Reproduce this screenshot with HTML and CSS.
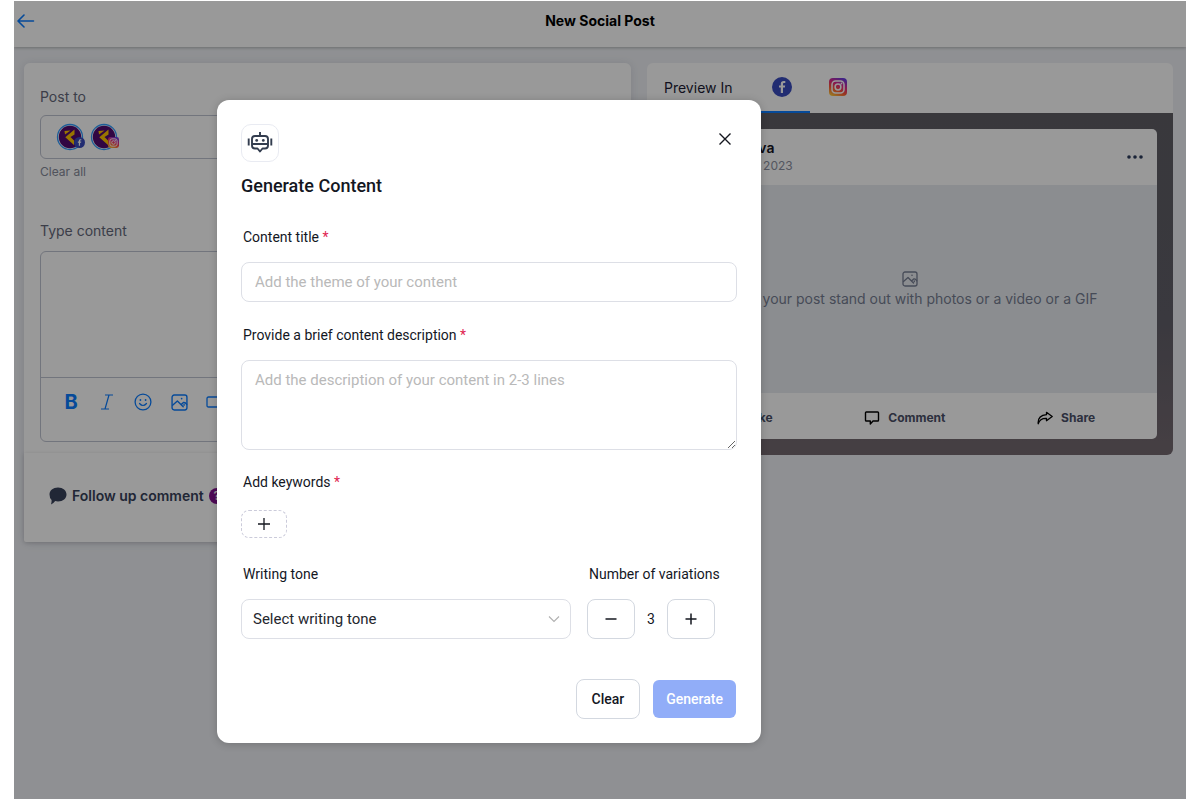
FILE: index.html
```
<!DOCTYPE html>
<html lang="en">
<head>
<meta charset="utf-8">
<title>New Social Post</title>
<link rel="stylesheet" href="styles.css">
</head>
<body>
<svg class="defs" aria-hidden="true">
  <defs>
    <linearGradient id="ig" x1="0.2" y1="1" x2="0.7" y2="0">
      <stop offset="0" stop-color="#ffc83d"/><stop offset="0.35" stop-color="#ff5a35"/><stop offset="0.65" stop-color="#e0268a"/><stop offset="1" stop-color="#6a3be0"/>
    </linearGradient>
    <symbol id="facebook" viewBox="0 0 20 20">
      <circle cx="10" cy="10" r="10" fill="#3a4bbe"/>
      <path d="M11 16v-5.400h1.900l.3-2.200H11V7.100c0-.7.300-1.100 1.200-1.100h1.100V4.100c-.4-.1-1-.1-1.600-.1-1.800 0-2.900 1-2.900 2.800v1.600H7v2.200h1.800V16z" fill="#fff"/>
    </symbol>
    <symbol id="instagram" viewBox="0 0 18 18">
      <rect width="18" height="18" rx="4" fill="url(#ig)"/>
      <rect x="3" y="3" width="12" height="12" rx="3.500" fill="none" stroke="#fff" stroke-width="1.500"/>
      <circle cx="9" cy="9" r="2.900" fill="none" stroke="#fff" stroke-width="1.500"/>
      <circle cx="12.500" cy="5.500" r="0.900" fill="#fff"/>
    </symbol>
    <symbol id="brand" viewBox="0 0 28 28">
      <circle cx="14" cy="14" r="12.500" fill="#fff" stroke="#2f9bff" stroke-width="1.300"/>
      <circle cx="14" cy="14" r="11.200" fill="#520b70"/>
      <path d="M18.500 6.500v5L14.500 14l3.500 3.500V22L9.300 14.300z" fill="#ffc400"/>
      <path d="M8.500 8l6-.5-5.500 4z" fill="#ffc400"/>
    </symbol>
    <symbol id="picture" viewBox="0 0 16 16">
      <g fill="none" stroke="currentColor" stroke-width="1.300" stroke-linejoin="round" stroke-linecap="round">
        <rect x="1" y="1" width="14" height="14" rx="2"/>
        <path d="M1.500 10.500 6 6.500l5.500 5.500M9.500 10l2.200-2q1.800-.4 3.100 1.800M12.300 9.800v.9"/>
      </g>
      <circle cx="10" cy="4.300" r="0.800" fill="currentColor"/>
    </symbol>
  </defs>
</svg>

<div class="app">
  <header class="topbar">
    <button class="back" aria-label="Back">
      <svg width="18" height="14" viewBox="0 0 18 14"><path d="M16.500 7H1.500M7 1 1 7l6 6" fill="none" stroke="currentColor" stroke-width="1.600" stroke-linecap="round" stroke-linejoin="round"/></svg>
    </button>
    <h1>New Social Post</h1>
  </header>

  <main class="columns">
    <section class="composer">
      <div class="composer-main">
        <h2 class="caption">Post to</h2>
        <div class="accounts">
          <span class="account"><svg width="28" height="28"><use href="#brand"/></svg><svg class="badge" width="11" height="11"><use href="#facebook"/></svg></span>
          <span class="account"><svg width="28" height="28"><use href="#brand"/></svg><svg class="badge" width="11" height="11"><use href="#instagram"/></svg></span>
        </div>
        <button class="clear-all">Clear all</button>
        <label class="caption" for="post">Type content</label>
        <div class="editor">
          <textarea id="post"></textarea>
          <div class="tools">
            <button class="bold" aria-label="Bold">B</button>
            <button aria-label="Italic"><svg width="18" height="18" viewBox="0 0 18 18"><path d="M7 2h8M3 16h8M11 2 7 16" fill="none" stroke="currentColor" stroke-width="1.200"/></svg></button>
            <button aria-label="Emoji"><svg width="18" height="18" viewBox="0 0 18 18"><circle cx="9" cy="9" r="7.900" fill="none" stroke="currentColor" stroke-width="1.300"/><path d="M5.500 10.500q3.500 4 7 0" fill="none" stroke="currentColor" stroke-width="1.200" stroke-linecap="round"/><circle cx="6.400" cy="7" r="0.900" fill="currentColor"/><circle cx="11.600" cy="7" r="0.900" fill="currentColor"/></svg></button>
            <button aria-label="Image"><svg width="17" height="17"><use href="#picture"/></svg></button>
            <button aria-label="Video"><svg width="18" height="18" viewBox="0 0 18 18"><path d="M2.500 4H11q1.500 0 1.500 1.500v7q0 1.500-1.500 1.500H2.500Q1 14 1 12.500v-7Q1 4 2.500 4zM12.500 8 17 5.500v7L12.500 10" fill="none" stroke="currentColor" stroke-width="1.300"/></svg></button>
          </div>
        </div>
      </div>
      <div class="followup">
        <svg width="18" height="18" viewBox="0 0 18 18"><path d="M9 .5c5 0 8.500 3 8.500 7s-3.500 7-8.500 7c-1 0-2-.1-2.800-.4Q4.500 16.500 2 17.500q.8-2 .6-4.500Q.5 11 .5 7.500c0-4 3.500-7 8.500-7z" fill="currentColor"/></svg>
        <span>Follow up comment</span>
        <span class="help">?</span>
      </div>
    </section>

    <section class="preview">
      <div class="tabs">
        <h2>Preview In</h2>
        <button class="tab active" aria-label="Facebook"><svg width="20" height="20"><use href="#facebook"/></svg></button>
        <button class="tab" aria-label="Instagram"><svg width="18" height="18"><use href="#instagram"/></svg></button>
      </div>
      <div class="stage">
        <article class="post">
          <div class="post-head">
            <svg width="36" height="36"><use href="#brand"/></svg>
            <div class="who"><strong>Geneva</strong><span>Nov 9, 2023</span></div>
            <button class="more" aria-label="More"><svg width="16" height="4" viewBox="0 0 16 4"><g fill="currentColor"><circle cx="2" cy="2" r="1.800"/><circle cx="8" cy="2" r="1.800"/><circle cx="14" cy="2" r="1.800"/></g></svg></button>
          </div>
          <div class="media">
            <svg width="16" height="16"><use href="#picture"/></svg>
            <span>Make your post stand out with photos or a video or a GIF</span>
          </div>
          <div class="actions">
            <button><svg width="16" height="16" viewBox="0 0 16 16"><path d="M1.500 7H5v7H1.500zM5 7l3-5.500q2 0 1.500 4.500H14l-1 8H5" fill="none" stroke="#000" stroke-width="1.300"/></svg>Like</button>
            <button><svg width="16" height="16" viewBox="0 0 16 16"><path d="M2.300 2h11.400q.8 0 .8.800v7.400q0 .8-.8.800H9l-2.700 3V11h-4q-.8 0-.8-.8V2.800q0-.8.800-.8z" fill="none" stroke="#000" stroke-width="1.400" stroke-linejoin="round"/></svg>Comment</button>
            <button><svg width="16" height="16" viewBox="0 0 16 16"><path d="M9.500 2.300 15.200 6.500 9.500 10.700V8.300Q3 8 1.200 13.800.5 5.500 9.500 4.700z" fill="none" stroke="#000" stroke-width="1.300" stroke-linejoin="round"/></svg>Share</button>
          </div>
        </article>
      </div>
    </section>
  </main>

  <div class="backdrop">
    <form class="modal" role="dialog" aria-labelledby="dialog-title">
      <div class="modal-top">
        <span class="bot">
          <svg width="26" height="24" viewBox="0 0 26 24"><g fill="none" stroke="currentColor" stroke-width="1.900" stroke-linejoin="round"><path d="M13 1v4M8 5h10q3 0 3 3v6.500q0 3-3 3h-2.500L13 20.500l-2.500-3H8q-3 0-3-3V8q0-3 3-3zM5 13h16M1.700 7.500v7M24.300 7.500v7"/></g><circle cx="9.700" cy="9.400" r="1.400" fill="currentColor"/><circle cx="16.300" cy="9.400" r="1.400" fill="currentColor"/></svg>
        </span>
        <button type="button" class="close" aria-label="Close"><svg width="12" height="12" viewBox="0 0 12 12"><path d="M.5.500l11 11M11.500.500l-11 11" stroke="currentColor" stroke-width="1.400"/></svg></button>
      </div>
      <h2 id="dialog-title">Generate Content</h2>

      <label for="title">Content title <em>*</em></label>
      <input id="title" class="field" type="text" placeholder="Add the theme of your content">

      <label for="description">Provide a brief content description <em>*</em></label>
      <textarea id="description" class="field area" placeholder="Add the description of your content in 2-3 lines"></textarea>

      <label for="add-keyword">Add keywords <em>*</em></label>
      <button type="button" id="add-keyword" class="chip" aria-label="Add keyword"><svg width="12" height="12" viewBox="0 0 12 12"><path d="M6 0v12M0 6h12" stroke="currentColor" stroke-width="1.300"/></svg></button>

      <div class="options">
        <div class="tone">
          <label for="tone">Writing tone</label>
          <div class="select">
            <select id="tone" class="field"><option>Select writing tone</option></select>
            <svg width="12" height="8" viewBox="0 0 12 8"><path d="M1 1.500l5 5 5-5" fill="none" stroke="currentColor" stroke-width="1.100"/></svg>
          </div>
        </div>
        <div class="count">
          <label for="variations">Number of variations</label>
          <div class="stepper">
            <button type="button" aria-label="Fewer"><svg width="12" height="12" viewBox="0 0 12 12"><path d="M.5 6h11" stroke="currentColor" stroke-width="1.500"/></svg></button>
            <output id="variations">3</output>
            <button type="button" aria-label="More variations"><svg width="12" height="12" viewBox="0 0 12 12"><path d="M6 .5v11M.5 6h11" stroke="currentColor" stroke-width="1.500"/></svg></button>
          </div>
        </div>
      </div>

      <div class="footer">
        <button type="reset" class="clear">Clear</button>
        <button type="button" class="generate">Generate</button>
      </div>
    </form>
  </div>
</div>
</body>
</html>
```
FILE: styles.css
```
* { box-sizing: border-box; }
body {
  margin: 0;
  padding: 1px 14px;
  background: #fff;
  font-family: Inter, sans-serif;
  font-size: 14px;
  line-height: 20px;
}
h1, h2 { margin: 0; }
button, input, textarea, select { font: inherit; color: inherit; }
button { padding: 0; border: 0; background: none; cursor: pointer; }
svg { display: block; flex: none; }
.defs { position: absolute; width: 0; height: 0; }

.app {
  position: relative;
  min-height: calc(100vh - 2px);
  background: #eff1f5;
}

.topbar {
  display: grid;
  grid-template-columns: 1fr auto 1fr;
  height: 46px;
  padding: 10px 3px 0;
  background: #fff;
  box-shadow: 0 1px 3px rgba(0, 0, 0, 0.25);
  clip-path: inset(0 0 -6px);
}
.topbar h1 { font-size: 14px; font-weight: 700; color: #000; }
.back { display: flex; align-items: center; height: 20px; color: #0a7cff; }

.columns {
  display: grid;
  grid-template-columns: 607fr 526fr;
  gap: 16px;
  align-items: start;
  padding: 16px 13px 16px 10px;
}

.composer {
  border-radius: 6px;
  box-shadow: 0 1px 10px rgba(60, 60, 100, 0.15);
}
.composer-main {
  padding: 24px 16px 11px;
  background: #fff;
  border-radius: 6px 6px 0 0;
}
.caption { display: block; font-size: 14px; font-weight: 400; color: #64687a; }
.accounts {
  display: flex;
  align-items: center;
  gap: 6px;
  height: 44px;
  margin-top: 8px;
  padding: 0 15px;
  border: 1px solid #bfc3d0;
  border-radius: 6px;
}
.account { position: relative; }
.badge { position: absolute; right: -1px; bottom: 3px; }
.clear-all {
  display: block;
  margin: 3px 0 39px;
  font-size: 12px;
  color: #858a99;
}
.editor {
  margin-top: 10px;
  border: 1px solid #bfc3d0;
  border-radius: 6px;
}
.editor textarea {
  display: block;
  width: 100%;
  height: 126px;
  border: 0;
  border-bottom: 1px solid #bfc3d0;
  background: none;
  resize: none;
}
.tools {
  display: flex;
  gap: 18px;
  height: 63px;
  padding: 14px 21px;
  color: #0a7cff;
}
.tools button { display: flex; justify-content: center; align-items: center; width: 18px; height: 20px; }
.tools .bold { font-size: 20px; font-weight: 700; }
.followup {
  display: flex;
  align-items: center;
  gap: 5px;
  height: 89px;
  padding: 0 25px 4px;
  background: #fff;
  border-radius: 0 0 2px 2px;
  box-shadow: 0 1px 4px rgba(0, 0, 0, 0.15);
  font-weight: 600;
  color: #38415a;
}
.help {
  width: 16px;
  height: 16px;
  border-radius: 50%;
  background: #83108f;
  color: #fff;
  font-size: 12px;
  line-height: 16px;
  text-align: center;
}

.preview { border-radius: 6px; overflow: hidden; }
.tabs { display: flex; height: 50px; padding-left: 17px; background: #fff; }
.tabs h2 { width: 90px; padding-top: 15px; font-size: 14px; font-weight: 400; color: #1c1c34; }
.tab { display: flex; justify-content: center; align-items: center; width: 56px; border-bottom: 2px solid transparent; }
.tab.active { border-color: #0a7cff; }
.stage {
  padding: 16px;
  background: linear-gradient(#5f5e65, #615f69 60%, #756a71);
}
.post { background: #fff; border-radius: 5px; overflow: hidden; }
.post-head { display: flex; align-items: center; gap: 8px; height: 56px; padding: 0 14px 0 16px; }
.who { display: flex; flex: 1; flex-direction: column; line-height: 18px; }
.who strong { font-weight: 600; color: #14141f; }
.who span { font-size: 12px; color: #8b90a0; }
.more { color: #2c3b5c; }
.media {
  display: flex;
  flex-direction: column;
  align-items: center;
  justify-content: center;
  gap: 2px;
  height: 208px;
  padding-top: 2px;
  background: #e8ecf0;
  color: #767d92;
}
.actions {
  display: flex;
  justify-content: space-around;
  height: 46px;
  padding: 4px 16px 0;
}
.actions button { display: flex; align-items: center; gap: 8px; font-size: 12px; font-weight: 700; color: #4a5068; }

.backdrop {
  position: absolute;
  inset: 0;
  padding: 99px 203px;
  background: rgba(0, 0, 0, 0.4);
}
.modal {
  max-width: 544px;
  padding: 24px;
  background: #fff;
  border-radius: 12px;
  box-shadow: 0 1px 8px rgba(0, 0, 0, 0.2);
  font-family: Roboto, sans-serif;
  color: #14171f;
}
.modal-top { display: flex; justify-content: space-between; align-items: flex-start; }
.bot {
  display: flex;
  justify-content: center;
  align-items: center;
  width: 38px;
  height: 38px;
  border: 1px solid #e9ebf2;
  border-radius: 10px;
  color: #333d4f;
}
.close { margin: 9px 6px 0; }
.modal h2 { margin: 12px 0 28px; font-size: 18px; font-weight: 500; line-height: 24px; }
.modal label { display: block; margin-bottom: 14px; padding-left: 2px; line-height: 22px; }
.modal em { font-style: normal; color: #e02450; }
.field {
  display: block;
  width: 100%;
  height: 40px;
  padding: 0 13px;
  border: 1px solid #dddfe6;
  border-radius: 8px;
  background: #fff;
  font-size: 15px;
  outline: 0;
}
.field::placeholder { color: #b9b9b9; opacity: 1; }
input.field { margin-bottom: 22px; }
.area { height: 90px; padding: 9px 13px; margin-bottom: 21px; resize: vertical; }
.chip {
  display: flex;
  justify-content: center;
  align-items: center;
  width: 46px;
  height: 28px;
  margin: 17px 0 25px;
  border: 1px dashed #cbcbda;
  border-radius: 8px;
}
.options { display: grid; grid-template-columns: 330px 1fr; gap: 16px; }
.select { position: relative; }
.select select { appearance: none; padding: 0 11px; color: #24272e; }
.select svg { position: absolute; right: 11px; top: 16px; color: #b0b0b0; pointer-events: none; }
.stepper { display: flex; align-items: center; }
.stepper button {
  display: flex;
  justify-content: center;
  align-items: center;
  width: 48px;
  height: 40px;
  border: 1px solid #d3d8e0;
  border-radius: 8px;
}
.stepper output { width: 32px; text-align: center; font-size: 14px; }
.footer { display: flex; justify-content: flex-end; align-items: center; gap: 13px; margin-top: 40px; padding-right: 1px; }
.footer button { font-weight: 500; border-radius: 8px; }
.clear { height: 40px; padding: 0 15px; }
.footer .clear { border: 1px solid #d3d8e0; }
.footer .generate { height: 38px; padding: 0 13px; border-radius: 6px; background: #91adf8; color: #fff; }
```
